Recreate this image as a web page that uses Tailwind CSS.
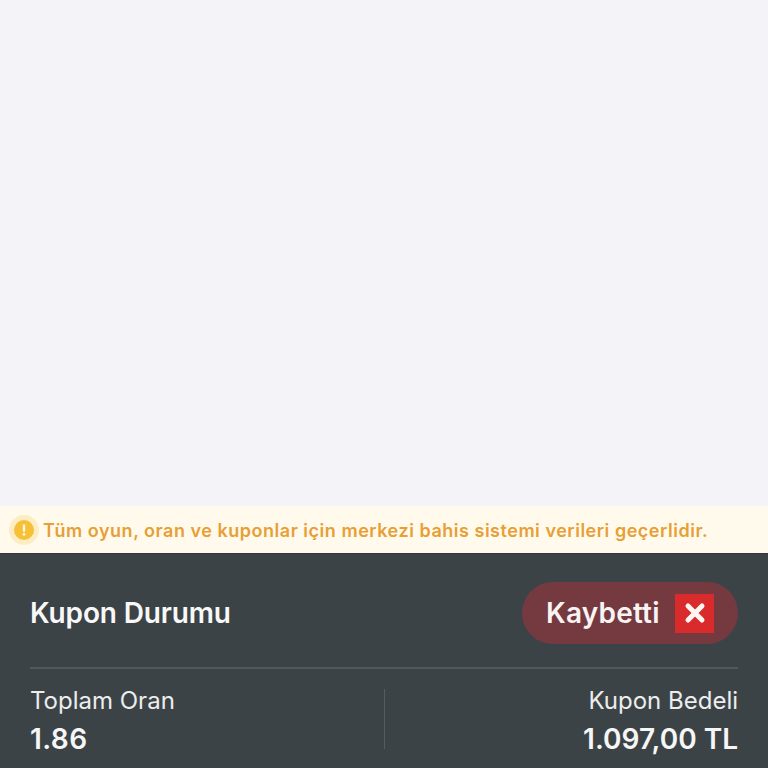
<!DOCTYPE html>
<html lang="en">

<head>
  <meta charset="UTF-8" />
  <meta name="viewport" content="width=device-width, initial-scale=1.0" />
  <title>Kupon</title>
  <script src="https://cdn.jsdelivr.net/npm/@tailwindcss/browser@4"></script>
</head>

<body class="bg-[#f3f3f8] h-[768px] overflow-hidden flex flex-col font-['Inter',sans-serif]">

  <!-- Empty area -->
  <div class="h-[506px] shrink-0"></div>

  <!-- Notice -->
  <div class="h-[47px] shrink-0 bg-[#fffaeb] flex items-center pl-[9px]">
    <div class="w-[30px] h-[30px] rounded-full bg-[#fdedc4] flex items-center justify-center">
      <svg width="20" height="20" viewBox="0 0 20 20">
        <circle cx="10" cy="10" r="10" fill="#f7c137" />
        <rect x="8.8" y="4.2" width="2.4" height="7.8" rx="1.2" fill="#fff6dc" />
        <circle cx="10" cy="14.4" r="1.4" fill="#fff6dc" />
      </svg>
    </div>
    <p class="ml-[4px] pt-[1px] text-[18px] font-semibold tracking-[0.52px] text-[#e79f36] whitespace-nowrap">Tüm oyun, oran ve kuponlar için merkezi bahis sistemi verileri geçerlidir.</p>
  </div>

  <!-- Coupon summary -->
  <div class="flex-1 bg-[#3c4347] border-t border-[#33393d] px-[30px] text-white">
    <div class="h-[115px] pt-[5px] flex items-center justify-between border-b-2 border-[#51575b]">
      <h2 class="text-[28px] font-semibold tracking-[-0.15px] text-[#f8f8f8]">Kupon Durumu</h2>
      <div class="w-[216px] h-[62px] rounded-full bg-[#753a40] flex items-center pl-[24px]">
        <span class="text-[28px] font-semibold tracking-[0.2px] text-[#faf3f3]">Kaybetti</span>
        <div class="ml-auto mr-[24px] w-[39px] h-[39px] bg-[#d92a2c] flex items-center justify-center">
          <svg width="22" height="22" viewBox="0 0 22 22">
            <path d="M4 4 18 18M18 4 4 18" stroke="#fff5f2" stroke-width="5" stroke-linecap="round" />
          </svg>
        </div>
      </div>
    </div>

    <div class="grid grid-cols-2 pt-[19px]">
      <div class="flex flex-col">
        <span class="text-[24px] leading-[26px] text-[#eceded]">Toplam Oran</span>
        <span class="mt-[10px] text-[28px] leading-[30px] font-semibold tracking-[0.4px] text-[#f6f6f6]">1.86</span>
      </div>
      <div class="flex flex-col items-end border-l border-[#555b5f] h-[60px] mt-[1px]">
        <span class="mt-[-1px] text-[24px] leading-[26px] text-[#eceded]">Kupon Bedeli</span>
        <span class="mt-[10px] text-[28px] leading-[30px] font-semibold text-[#f6f6f6]">1.097,00 TL</span>
      </div>
    </div>
  </div>

</body>

</html>
